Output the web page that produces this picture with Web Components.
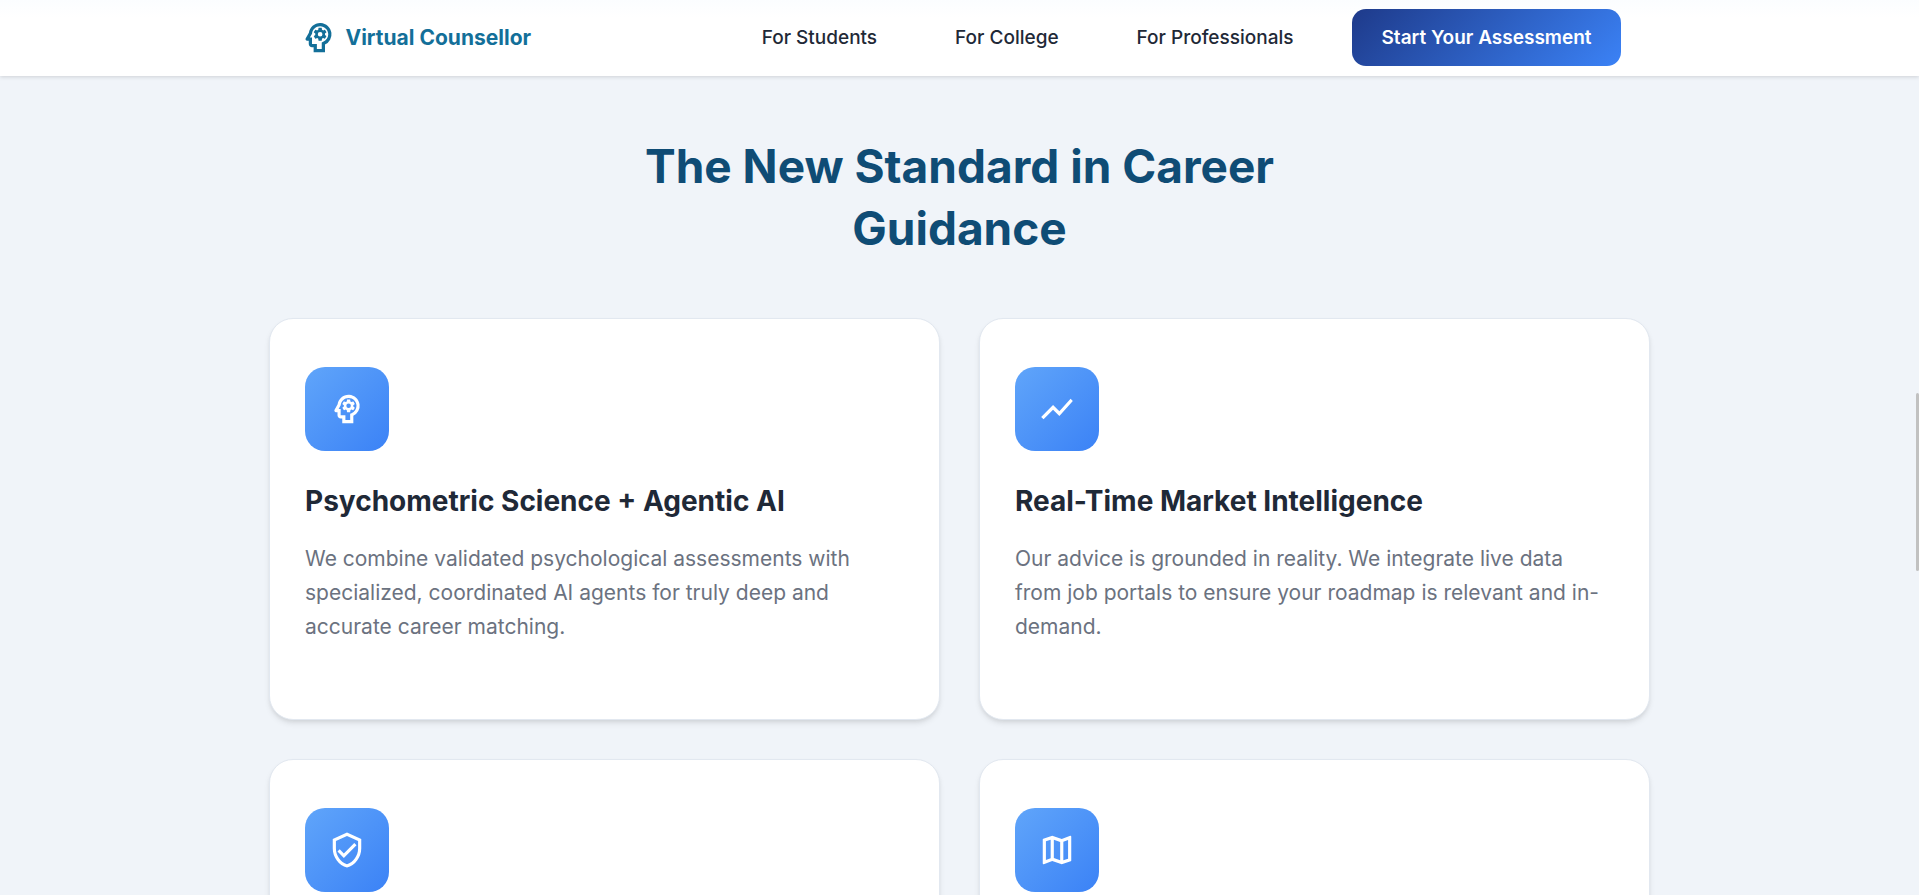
<!DOCTYPE html>
<html lang="en">
<head>
<meta charset="utf-8">
<meta name="viewport" content="width=device-width, initial-scale=1">
<title>Virtual Counsellor</title>
<style>
  body {
    margin: 0;
    font-family: Inter, "Liberation Sans", sans-serif;
    color: #1f2937;
    background: #f0f4f9;
  }
</style>
</head>
<body>
<vc-page>
  <vc-header slot="header">
    <vc-nav-link href="#students">For Students</vc-nav-link>
    <vc-nav-link href="#college">For College</vc-nav-link>
    <vc-nav-link href="#professionals">For Professionals</vc-nav-link>
    <vc-cta slot="action">Start Your Assessment</vc-cta>
  </vc-header>
  <vc-features>
    <span slot="title">The New Standard in Career Guidance</span>
    <vc-card icon="psychology">
      <span slot="title">Psychometric Science + Agentic AI</span>
      We combine validated psychological assessments with specialized, coordinated AI agents for truly deep and accurate career matching.
    </vc-card>
    <vc-card icon="trend">
      <span slot="title">Real-Time Market Intelligence</span>
      Our advice is grounded in reality. We integrate live data from job portals to ensure your roadmap is relevant and in-demand.
    </vc-card>
    <vc-card icon="shield"></vc-card>
    <vc-card icon="map"></vc-card>
  </vc-features>
</vc-page>

<script>
const ICONS = {
  psychology: '<path d="M19.94 9.06c-.43-3.27-3.23-5.86-6.53-6.05C13.27 3 13.14 3 13 3 9.47 3 6.57 5.61 6.08 9l-1.93 3.48C3.74 13.14 4.22 14 5 14h1v2c0 1.1.9 2 2 2h1v3h7v-4.68a7 7 0 0 0 3.94-7.26zm-5.05 5.57l-.89.42V19h-3v-3H8v-4H6.7l1.33-2.33C8.21 7.06 10.35 5 13 5c2.76 0 5 2.24 5 5 0 2.09-1.29 3.88-3.11 4.63z"/><path fill-rule="evenodd" d="M16 10c0 .13-.01.26-.02.39l.83.66c.08.06.1.16.05.25l-.8 1.39c-.05.09-.16.12-.24.09l-.99-.4c-.21.16-.43.29-.67.39L14 13.83c-.01.1-.1.17-.2.17h-1.6c-.1 0-.18-.07-.2-.17l-.15-1.06c-.25-.1-.47-.23-.68-.39l-.99.4c-.09.03-.2 0-.25-.09l-.8-1.39c-.05-.08-.03-.19.05-.25l.84-.66c-.01-.13-.02-.26-.02-.39s.02-.27.04-.39l-.85-.66c-.08-.06-.1-.16-.05-.26l.8-1.38c.05-.09.15-.12.24-.09l1 .4c.2-.15.43-.29.67-.39L12 6.17c.02-.1.1-.17.2-.17h1.6c.1 0 .18.07.2.17l.15 1.06c.24.1.46.23.67.39l1-.4c.09-.03.2 0 .24.09l.8 1.38c.05.09.03.2-.05.26l-.85.66c.03.12.04.25.04.39zM13 8.57a1.43 1.43 0 1 0 0 2.86 1.43 1.43 0 0 0 0-2.86z"/>',
  trend: '<path d="M3.5 18.49l6-6.01 4 4L22 6.92l-1.41-1.41-7.09 7.97-4-4L2 16.99z"/>',
  shield: '<path d="M12 1L3 5v6c0 5.55 3.84 10.74 9 12 5.16-1.26 9-6.45 9-12V5l-9-4zm7 10c0 4.52-2.98 8.69-7 9.93-4.02-1.24-7-5.41-7-9.93V6.3l7-3.11 7 3.11V11zm-11.59.59L6 13l4 4 8-8-1.41-1.42L10 14.17z"/>',
  map: '<path d="M20.5 3l-.16.03L15 5.1 9 3 3.36 4.9c-.21.07-.36.25-.36.48V20.5c0 .28.22.5.5.5l.16-.03L9 18.9l6 2.1 5.64-1.9c.21-.07.36-.25.36-.48V3.5c0-.28-.22-.5-.5-.5zM10 5.47l4 1.4v11.66l-4-1.4V5.47zm-5 .99l3-1.01v11.7l-3 1.16V6.46zm14 11.08l-3 1.01V6.86l3-1.16v11.84z"/>'
};
const icon = name => `<svg viewBox="0 0 24 24" aria-hidden="true">${ICONS[name] || ''}</svg>`;

class Base extends HTMLElement {
  constructor() {
    super();
    this.attachShadow({ mode: 'open' });
  }
  connectedCallback() {
    this.shadowRoot.innerHTML = this.render();
  }
}

customElements.define('vc-page', class extends Base {
  render() {
    return `<style>
      :host { display: block; height: 100vh; overflow: hidden; }
      .thumb { position: fixed; right: 0; top: 393px; width: 3px; height: 178px; border-radius: 2px; background: #c1c1c1; }
    </style>
    <slot name="header"></slot>
    <main><slot></slot></main>
    <div class="thumb"></div>`;
  }
});

customElements.define('vc-header', class extends Base {
  render() {
    return `<style>
      :host { display: block; position: relative; padding-bottom: 1px; background: linear-gradient(#fbfdff, #fff 18px); box-shadow: 0 1px 4px rgba(0, 0, 0, .14); }
      .bar { box-sizing: border-box; max-width: 1322px; min-height: 75px; margin: 0 auto; display: flex; align-items: center; justify-content: space-between; }
      .brand { display: flex; align-items: center; gap: 8px; color: #136f99; font-size: 21px; font-weight: 700; line-height: 30px; text-decoration: none; }
      svg { width: 39px; height: 39px; fill: currentColor; }
      nav { display: flex; align-items: center; gap: 40px; }
    </style>
    <div class="bar">
      <a class="brand" href="#home">${icon('psychology')}<span>Virtual Counsellor</span></a>
      <nav><slot></slot><slot name="action"></slot></nav>
    </div>`;
  }
});

customElements.define('vc-nav-link', class extends Base {
  render() {
    return `<style>
      :host { display: block; }
      a { display: block; padding: 8px 19px; color: #1f2937; font-size: 19px; font-weight: 500; line-height: 30px; text-decoration: none; }
    </style>
    <a href="${this.getAttribute('href')}"><slot></slot></a>`;
  }
});

customElements.define('vc-cta', class extends Base {
  render() {
    return `<style>
      :host { display: block; }
      button { display: block; border: 0; border-radius: 14px; padding: 14px 29px 13px; font: 600 19px/30px Inter, "Liberation Sans", sans-serif; color: #fff; background: linear-gradient(135deg, #1e3a8a, #3b82f6); }
    </style>
    <button type="button"><slot></slot></button>`;
  }
});

customElements.define('vc-features', class extends Base {
  render() {
    return `<style>
      :host { display: block; padding: 59px 20px; }
      h2 { max-width: 800px; margin: 0 auto 59px; color: #0f4c75; font-size: 46px; font-weight: 700; line-height: 62px; text-align: center; }
      .grid { max-width: 1381px; margin: 0 auto; display: grid; grid-template-columns: 1fr 1fr; grid-auto-rows: minmax(402px, auto); gap: 39px; }
    </style>
    <section>
      <h2><slot name="title"></slot></h2>
      <div class="grid"><slot></slot></div>
    </section>`;
  }
});

customElements.define('vc-card', class extends Base {
  render() {
    const titled = this.querySelector('[slot=title]');
    return `<style>
      :host { display: block; box-sizing: border-box; padding: 48px 35px; border: 1px solid #e2e8f0; border-radius: 24px; background: #fff; box-shadow: 0 4px 6px -1px rgba(0, 0, 0, .1), 0 2px 4px -1px rgba(0, 0, 0, .06); }
      .tile { width: 84px; height: 84px; display: grid; place-items: center; border-radius: 20px; color: #fff; background: linear-gradient(135deg, #60a5fa, #3b82f6); }
      svg { width: 38px; height: 38px; fill: currentColor; }
      h3 { margin: 32px 0 23px; color: #1f2937; font-size: 28px; font-weight: 650; line-height: 36px; }
      p { margin: 0; color: #6b7280; font-size: 21px; line-height: 34px; }
    </style>
    <div class="tile">${icon(this.getAttribute('icon'))}</div>
    ${titled ? '<h3><slot name="title"></slot></h3><p><slot></slot></p>' : ''}`;
  }
});
</script>
</body>
</html>
